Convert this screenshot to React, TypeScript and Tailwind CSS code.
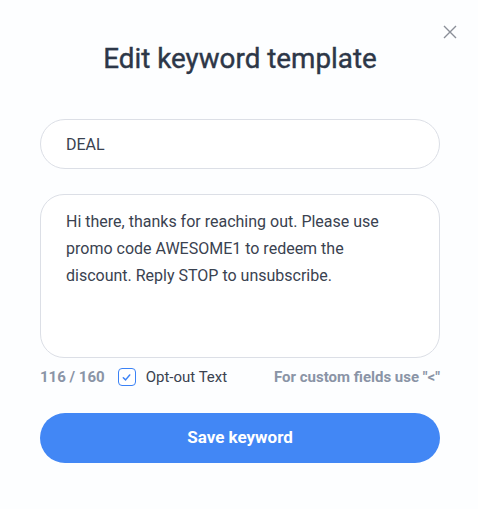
import { useState } from "react"

const App = () => {
  const [keyword, setKeyword] = useState("DEAL")
  const [message, setMessage] = useState(
    "Hi there, thanks for reaching out. Please use promo code AWESOME1 to redeem the discount. Reply STOP to unsubscribe."
  )
  const [optOut, setOptOut] = useState(true)

  return (
    <div className="relative w-[478px] h-[509px] bg-[#fdfeff] font-['Roboto',sans-serif] pl-10 pr-[38px] pt-[38px]">
      {/* close */}
      <button className="absolute right-[20px] top-[24px] w-[16px] h-[16px] text-[#8a8f98]">
        <svg viewBox="0 0 16 16" width="16" height="16" fill="none" stroke="currentColor" strokeWidth="1.4">
          <path d="M2 2 L14 14 M14 2 L2 14" />
        </svg>
      </button>

      <h1 className="text-center text-[27.8px] leading-[42px] font-normal text-[#2d3748] [-webkit-text-stroke:0.4px]">
        Edit keyword template
      </h1>

      <div className="mt-[39px] flex flex-col">
        <input
          value={keyword}
          onChange={(e) => setKeyword(e.target.value)}
          className="h-[50px] w-full rounded-full border border-[#dcdfe6] bg-white px-[25px] text-[16px] text-[#3a4250] outline-none"
        />

        <textarea
          value={message}
          onChange={(e) => setMessage(e.target.value)}
          className="mt-[25px] h-[164px] w-full resize-none rounded-[24px] border border-[#dcdfe6] bg-white pl-[25px] pr-[40px] pt-[13px] text-[16px] leading-[27px] text-[#3a4250] outline-none"
        />

        <div className="mt-[8px] flex items-center h-[22px] text-[15px]">
          <span className="font-bold text-[#8a94a6]">116 / 160</span>
          <label className="ml-[13px] flex items-center cursor-pointer">
            <span
              onClick={() => setOptOut(!optOut)}
              className="flex items-center justify-center w-[18px] h-[18px] rounded-[4px] border-[1.5px] border-[#3b82f6] bg-white"
            >
              {optOut && (
                <svg viewBox="0 0 12 12" width="11" height="11" fill="none" stroke="#3b82f6" strokeWidth="1.6" strokeLinecap="round" strokeLinejoin="round">
                  <path d="M2.5 6.3 L5 8.6 L9.5 3.2" />
                </svg>
              )}
            </span>
            <span className="ml-[10px] text-[#3a4250]">Opt-out Text</span>
          </label>
          <span className="ml-auto font-bold text-[#8a94a6]">For custom fields use "&lt;"</span>
        </div>

        <button className="mt-[25px] h-[50px] w-full rounded-full bg-[#4287f5] text-white text-[17px] font-bold">
          Save keyword
        </button>
      </div>
    </div>
  )
}

export default App
